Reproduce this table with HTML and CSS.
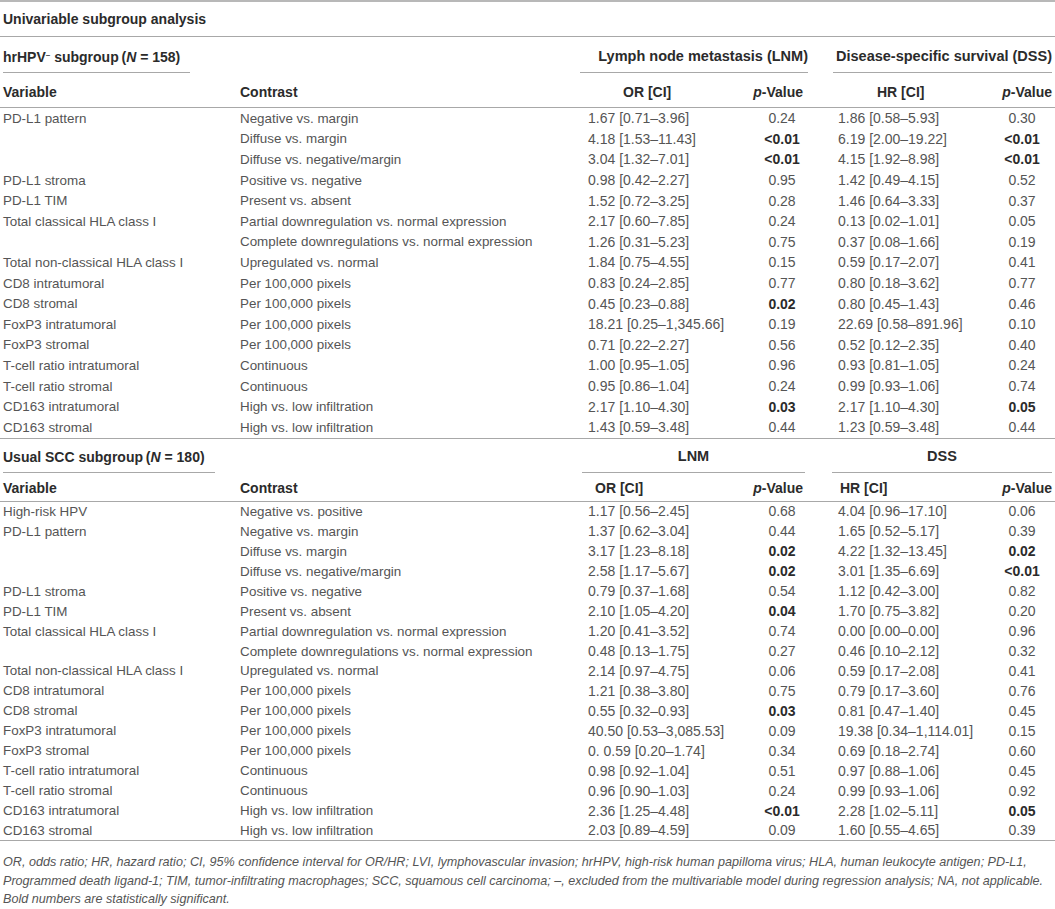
FILE: index.html
```html
<!DOCTYPE html>
<html>

<head>
    <meta charset="UTF-8">
    <title>Univariable subgroup analysis</title>
    <link rel="stylesheet" href="styles.css">
</head>

<body>

    <table class="tbl">
        <colgroup>
            <col class="c_var">
            <col class="c_con">
            <col class="c_or">
            <col class="c_p">
            <col class="c_hr">
            <col class="c_p2">
        </colgroup>

        <tr class="title_row">
            <td colspan="6">Univariable subgroup analysis</td>
        </tr>

        <!-- hrHPV- -->
        <tr class="group_row">
            <td colspan="2"><span class="group_name">hrHPV<sup>–</sup> subgroup&thinsp;(<i>N</i> = 158)</span></td>
            <td colspan="2"><div class="span_head lnm1">Lymph node metastasis (LNM)</div></td>
            <td colspan="2"><div class="span_head dss1">Disease-specific survival (DSS)</div></td>
        </tr>
        <tr class="head_row">
            <td>Variable</td>
            <td>Contrast</td>
            <td class="h_or1">OR [CI]</td>
            <td class="h_p"><i>p</i>-Value</td>
            <td class="h_hr1">HR [CI]</td>
            <td class="h_p2"><i>p</i>-Value</td>
        </tr>
        <tr class="r1"><td>PD-L1 pattern</td><td>Negative vs. margin</td><td class="or">1.67 [0.71–3.96]</td><td class="p">0.24</td><td class="hr">1.86 [0.58–5.93]</td><td class="p2">0.30</td></tr>
        <tr class="r1"><td></td><td>Diffuse vs. margin</td><td class="or">4.18 [1.53–11.43]</td><td class="p"><b>&lt;0.01</b></td><td class="hr">6.19 [2.00–19.22]</td><td class="p2"><b>&lt;0.01</b></td></tr>
        <tr class="r1"><td></td><td>Diffuse vs. negative/margin</td><td class="or">3.04 [1.32–7.01]</td><td class="p"><b>&lt;0.01</b></td><td class="hr">4.15 [1.92–8.98]</td><td class="p2"><b>&lt;0.01</b></td></tr>
        <tr class="r1"><td>PD-L1 stroma</td><td>Positive vs. negative</td><td class="or">0.98 [0.42–2.27]</td><td class="p">0.95</td><td class="hr">1.42 [0.49–4.15]</td><td class="p2">0.52</td></tr>
        <tr class="r1"><td>PD-L1 TIM</td><td>Present vs. absent</td><td class="or">1.52 [0.72–3.25]</td><td class="p">0.28</td><td class="hr">1.46 [0.64–3.33]</td><td class="p2">0.37</td></tr>
        <tr class="r1"><td>Total classical HLA class I</td><td>Partial downregulation vs. normal expression</td><td class="or">2.17 [0.60–7.85]</td><td class="p">0.24</td><td class="hr">0.13 [0.02–1.01]</td><td class="p2">0.05</td></tr>
        <tr class="r1"><td></td><td>Complete downregulations vs. normal expression</td><td class="or">1.26 [0.31–5.23]</td><td class="p">0.75</td><td class="hr">0.37 [0.08–1.66]</td><td class="p2">0.19</td></tr>
        <tr class="r1"><td>Total non-classical HLA class I</td><td>Upregulated vs. normal</td><td class="or">1.84 [0.75–4.55]</td><td class="p">0.15</td><td class="hr">0.59 [0.17–2.07]</td><td class="p2">0.41</td></tr>
        <tr class="r1"><td>CD8 intratumoral</td><td>Per 100,000 pixels</td><td class="or">0.83 [0.24–2.85]</td><td class="p">0.77</td><td class="hr">0.80 [0.18–3.62]</td><td class="p2">0.77</td></tr>
        <tr class="r1"><td>CD8 stromal</td><td>Per 100,000 pixels</td><td class="or">0.45 [0.23–0.88]</td><td class="p"><b>0.02</b></td><td class="hr">0.80 [0.45–1.43]</td><td class="p2">0.46</td></tr>
        <tr class="r1"><td>FoxP3 intratumoral</td><td>Per 100,000 pixels</td><td class="or">18.21 [0.25–1,345.66]</td><td class="p">0.19</td><td class="hr">22.69 [0.58–891.96]</td><td class="p2">0.10</td></tr>
        <tr class="r1"><td>FoxP3 stromal</td><td>Per 100,000 pixels</td><td class="or">0.71 [0.22–2.27]</td><td class="p">0.56</td><td class="hr">0.52 [0.12–2.35]</td><td class="p2">0.40</td></tr>
        <tr class="r1"><td>T-cell ratio intratumoral</td><td>Continuous</td><td class="or">1.00 [0.95–1.05]</td><td class="p">0.96</td><td class="hr">0.93 [0.81–1.05]</td><td class="p2">0.24</td></tr>
        <tr class="r1"><td>T-cell ratio stromal</td><td>Continuous</td><td class="or">0.95 [0.86–1.04]</td><td class="p">0.24</td><td class="hr">0.99 [0.93–1.06]</td><td class="p2">0.74</td></tr>
        <tr class="r1"><td>CD163 intratumoral</td><td>High vs. low infiltration</td><td class="or">2.17 [1.10–4.30]</td><td class="p"><b>0.03</b></td><td class="hr">2.17 [1.10–4.30]</td><td class="p2"><b>0.05</b></td></tr>
        <tr class="r1 last_row"><td>CD163 stromal</td><td>High vs. low infiltration</td><td class="or">1.43 [0.59–3.48]</td><td class="p">0.44</td><td class="hr">1.23 [0.59–3.48]</td><td class="p2">0.44</td></tr>

        <!-- usual SCC -->
        <tr class="group_row group_row2">
            <td colspan="2"><span class="group_name">Usual SCC subgroup&thinsp;(<i>N</i> = 180)</span></td>
            <td colspan="2"><div class="span_head lnm2">LNM</div></td>
            <td colspan="2"><div class="span_head dss2">DSS</div></td>
        </tr>
        <tr class="head_row head_row2">
            <td>Variable</td>
            <td>Contrast</td>
            <td class="h_or2">OR [CI]</td>
            <td class="h_p"><i>p</i>-Value</td>
            <td class="h_hr2">HR [CI]</td>
            <td class="h_p2"><i>p</i>-Value</td>
        </tr>
        <tr><td>High-risk HPV</td><td>Negative vs. positive</td><td class="or">1.17 [0.56–2.45]</td><td class="p">0.68</td><td class="hr">4.04 [0.96–17.10]</td><td class="p2">0.06</td></tr>
        <tr><td>PD-L1 pattern</td><td>Negative vs. margin</td><td class="or">1.37 [0.62–3.04]</td><td class="p">0.44</td><td class="hr">1.65 [0.52–5.17]</td><td class="p2">0.39</td></tr>
        <tr><td></td><td>Diffuse vs. margin</td><td class="or">3.17 [1.23–8.18]</td><td class="p"><b>0.02</b></td><td class="hr">4.22 [1.32–13.45]</td><td class="p2"><b>0.02</b></td></tr>
        <tr><td></td><td>Diffuse vs. negative/margin</td><td class="or">2.58 [1.17–5.67]</td><td class="p"><b>0.02</b></td><td class="hr">3.01 [1.35–6.69]</td><td class="p2"><b>&lt;0.01</b></td></tr>
        <tr><td>PD-L1 stroma</td><td>Positive vs. negative</td><td class="or">0.79 [0.37–1.68]</td><td class="p">0.54</td><td class="hr">1.12 [0.42–3.00]</td><td class="p2">0.82</td></tr>
        <tr><td>PD-L1 TIM</td><td>Present vs. absent</td><td class="or">2.10 [1.05–4.20]</td><td class="p"><b>0.04</b></td><td class="hr">1.70 [0.75–3.82]</td><td class="p2">0.20</td></tr>
        <tr><td>Total classical HLA class I</td><td>Partial downregulation vs. normal expression</td><td class="or">1.20 [0.41–3.52]</td><td class="p">0.74</td><td class="hr">0.00 [0.00–0.00]</td><td class="p2">0.96</td></tr>
        <tr><td></td><td>Complete downregulations vs. normal expression</td><td class="or">0.48 [0.13–1.75]</td><td class="p">0.27</td><td class="hr">0.46 [0.10–2.12]</td><td class="p2">0.32</td></tr>
        <tr><td>Total non-classical HLA class I</td><td>Upregulated vs. normal</td><td class="or">2.14 [0.97–4.75]</td><td class="p">0.06</td><td class="hr">0.59 [0.17–2.08]</td><td class="p2">0.41</td></tr>
        <tr><td>CD8 intratumoral</td><td>Per 100,000 pixels</td><td class="or">1.21 [0.38–3.80]</td><td class="p">0.75</td><td class="hr">0.79 [0.17–3.60]</td><td class="p2">0.76</td></tr>
        <tr><td>CD8 stromal</td><td>Per 100,000 pixels</td><td class="or">0.55 [0.32–0.93]</td><td class="p"><b>0.03</b></td><td class="hr">0.81 [0.47–1.40]</td><td class="p2">0.45</td></tr>
        <tr><td>FoxP3 intratumoral</td><td>Per 100,000 pixels</td><td class="or">40.50 [0.53–3,085.53]</td><td class="p">0.09</td><td class="hr">19.38 [0.34–1,114.01]</td><td class="p2">0.15</td></tr>
        <tr><td>FoxP3 stromal</td><td>Per 100,000 pixels</td><td class="or">0. 0.59 [0.20–1.74]</td><td class="p">0.34</td><td class="hr">0.69 [0.18–2.74]</td><td class="p2">0.60</td></tr>
        <tr><td>T-cell ratio intratumoral</td><td>Continuous</td><td class="or">0.98 [0.92–1.04]</td><td class="p">0.51</td><td class="hr">0.97 [0.88–1.06]</td><td class="p2">0.45</td></tr>
        <tr><td>T-cell ratio stromal</td><td>Continuous</td><td class="or">0.96 [0.90–1.03]</td><td class="p">0.24</td><td class="hr">0.99 [0.93–1.06]</td><td class="p2">0.92</td></tr>
        <tr><td>CD163 intratumoral</td><td>High vs. low infiltration</td><td class="or">2.36 [1.25–4.48]</td><td class="p"><b>&lt;0.01</b></td><td class="hr">2.28 [1.02–5.11]</td><td class="p2"><b>0.05</b></td></tr>
        <tr class="last_row"><td>CD163 stromal</td><td>High vs. low infiltration</td><td class="or">2.03 [0.89–4.59]</td><td class="p">0.09</td><td class="hr">1.60 [0.55–4.65]</td><td class="p2">0.39</td></tr>
    </table>

    <p class="note">
        OR, odds ratio; HR, hazard ratio; CI, 95% confidence interval for OR/HR; LVI, lymphovascular invasion; hrHPV, high-risk human papilloma virus; HLA, human leukocyte antigen; PD-L1,<br>
        Programmed death ligand-1; TIM, tumor-infiltrating macrophages; SCC, squamous cell carcinoma; –, excluded from the multivariable model during regression analysis; NA, not applicable.<br>
        Bold numbers are statistically significant.
    </p>

</body>

</html>
```

FILE: styles.css
```css
body {
    margin: 0;
    background: #fff;
    color: #555;
    font-family: "Liberation Sans", Arial, sans-serif;
    font-size: 13.4px;
}

b {
    color: #2b2b2b;
}

.tbl {
    width: 1055px;
    border-collapse: collapse;
    table-layout: fixed;
    border-top: 2px solid #b8b8b8;
}

.c_var { width: 237px; }
.c_con { width: 343px; }
.c_or { width: 160px; }
.c_p { width: 68px; }
.c_hr { width: 187px; }
.c_p2 { width: 60px; }

.tbl td {
    height: 19.95px;
    padding: 0 0 0 3px;
    white-space: nowrap;
    vertical-align: middle;
}

.tbl tr.r1 td {
    height: 20.6px;
}

/* data columns */
.tbl td.or { padding-left: 8px; font-size: 14px; }
.tbl td.p { padding-left: 16px; text-align: center; font-size: 14px; }
.tbl td.hr { padding-left: 30px; font-size: 14px; }
.tbl td.p2 { padding: 0 6px 0 0; text-align: center; font-size: 14px; }

.last_row td {
    border-bottom: 1px solid #a8a8a8;
}

/* header rows */
.title_row td {
    height: 34px;
    font-size: 14px;
    font-weight: bold;
    color: #2b2b2b;
    border-bottom: 1px solid #a8a8a8;
}

.group_row td {
    height: 36px;
    vertical-align: bottom;
    font-size: 14px;
    font-weight: bold;
    color: #2b2b2b;
}

.group_row2 td {
    height: 34px;
}

.group_name {
    display: inline-block;
    padding: 0 10px 7px 0;
    border-bottom: 1px solid #a8a8a8;
}

.group_name sup {
    font-size: 8px;
    vertical-align: 5px;
    line-height: 0;
}

.span_head {
    padding-bottom: 8px;
    font-size: 14.5px;
    border-bottom: 1px solid #a8a8a8;
}

.lnm1 { text-align: right; margin: 0 0 0 -3px; }
.dss1 { text-align: right; margin: 0 3px 0 22px; }
.lnm2 { text-align: center; margin: 0 3px 0 -1px; }
.dss2 { text-align: center; margin: 0 3px 0 21px; }

.head_row td {
    height: 30px;
    padding-top: 4px;
    font-size: 14px;
    font-weight: bold;
    color: #2b2b2b;
    border-bottom: 1px solid #a8a8a8;
}

.head_row2 td {
    height: 26px;
    padding-top: 2px;
}

.tbl td.h_or1 { padding-left: 43px; }
.tbl td.h_or2 { padding-left: 15px; }
.tbl td.h_hr1 { padding-left: 69px; }
.tbl td.h_hr2 { padding-left: 32px; }
.tbl td.h_p { text-align: right; padding-left: 0; padding-right: 5px; }
.tbl td.h_p2 { text-align: right; padding-left: 0; padding-right: 3px; }

.note {
    margin: 0;
    padding: 12px 0 0 3px;
    font-size: 12.6px;
    font-style: italic;
    line-height: 18.5px;
}
```
